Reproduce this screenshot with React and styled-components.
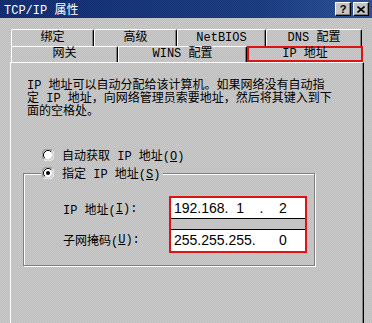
import React from "react";
import styled, { createGlobalStyle } from "styled-components";

const GlobalStyle = createGlobalStyle`
  html, body {
    margin: 0;
    padding: 0;
  }
  body {
    width: 372px;
    height: 323px;
    overflow: hidden;
    background: #c4c4c4;
  }
`;

const dither = `
  background-color: #c4c4c4;
  background-image: repeating-conic-gradient(#bdbdbd 0 25%, #cbcbcb 0 50%);
  background-size: 2px 2px;
`;

const Window = styled.div`
  width: 372px;
  height: 323px;
  overflow: hidden;
  display: flex;
  flex-direction: column;
  ${dither}
  font-family: "Liberation Mono", "Noto Sans CJK SC", monospace;
  font-size: 12px;
  color: #000;
`;

const TitleBar = styled.div`
  flex: none;
  height: 18px;
  display: flex;
  align-items: flex-start;
  padding: 0 3px 0 4px;
  background-color: #0e2a6e;
  background-image: repeating-conic-gradient(rgba(255, 255, 255, 0.08) 0 25%, transparent 0 50%),
    linear-gradient(90deg, #0a2468, #143478 70%, #24498f);
  background-size: 2px 2px, 100% 100%;
`;

const Title = styled.div`
  flex: 1;
  margin-top: 5px;
  line-height: 13px;
  color: #fff;
  white-space: nowrap;
`;

const Caption = styled.div`
  display: flex;
  gap: 2px;
  margin-top: 2px;
`;

const CaptionButton = styled.div`
  box-sizing: border-box;
  width: 16px;
  height: 14px;
  display: flex;
  align-items: center;
  justify-content: center;
  background: #c4c4c4;
  border-top: 1px solid #fff;
  border-left: 1px solid #fff;
  border-right: 1px solid #000;
  border-bottom: 1px solid #000;
  box-shadow: inset -1px -1px 0 #808080;
  font-family: "Liberation Sans", Arial, sans-serif;
  font-weight: bold;
  font-size: 11px;
  line-height: 11px;
`;

const Body = styled.div`
  flex: 1;
  min-height: 0;
  display: flex;
  flex-direction: column;
  padding: 11px 0 0 10px;
`;

const TabRow = styled.div`
  flex: none;
  display: flex;
  height: ${(p) => p.$h}px;
  padding-left: 1px;
`;

const Tab = styled.div`
  box-sizing: border-box;
  width: ${(p) => p.$w}px;
  height: 100%;
  display: flex;
  align-items: center;
  justify-content: center;
  white-space: nowrap;
  line-height: 13px;
  border-top: 1px solid #fff;
  border-left: 1px solid #fff;
  border-right: 1px solid #000;
  box-shadow: inset -1px 0 0 #808080;
  border-radius: 2px 2px 0 0;
  ${(p) =>
    p.$marked &&
    `
    border: 2px solid #dc1414;
    border-radius: 0;
    box-shadow: none;
  `}
`;

const Panel = styled.div`
  box-sizing: border-box;
  flex: 1;
  width: 354px;
  border-top: 1px solid #fff;
  border-left: 1px solid #fff;
  border-right: 1px solid #000;
  box-shadow: inset -1px 0 0 #808080;
  padding: 17px 0 0 12px;
`;

const Intro = styled.p`
  margin: 0;
  padding-left: 4px;
  line-height: 13px;
  white-space: nowrap;
`;

const RadioRow = styled.div`
  display: flex;
  align-items: center;
  gap: 8px;
  height: 14px;
  margin-top: 29px;
  padding-left: 19px;
  white-space: nowrap;
`;

const Group = styled.fieldset`
  box-sizing: border-box;
  width: 292px;
  min-width: 0;
  margin: 4px 0 0 0;
  padding: 0 0 12px 0;
  border: 1px solid #808080;
  box-shadow: 1px 1px 0 #fff, inset 1px 1px 0 #fff;
`;

const Legend = styled.legend`
  display: flex;
  align-items: center;
  gap: 8px;
  height: 14px;
  margin-left: 17px;
  padding: 0 3px 0 1px;
  white-space: nowrap;
  ${dither}
`;

const GroupBody = styled.div`
  display: grid;
  grid-template-columns: 106px 138px;
  grid-template-rows: 23px 10px 24px;
  padding: 16px 0 0 39px;
`;

const FieldLabel = styled.div`
  grid-column: 1;
  grid-row: ${(p) => p.$row};
  display: flex;
  align-items: center;
  padding: ${(p) => p.$pad};
  white-space: nowrap;
`;

const Frame = styled.div`
  grid-column: 2;
  grid-row: 1 / 4;
  display: flex;
  flex-direction: column;
  border: 2px solid #dc1414;
`;

const Field = styled.div`
  height: ${(p) => p.$h}px;
  display: flex;
  align-items: center;
  padding-left: 3px;
  background: #fff;
  border-${(p) => p.$edge}: 1px solid #000;
  font-family: "Liberation Sans", Arial, sans-serif;
  font-size: 14px;
  white-space: pre;
`;

const FieldGap = styled.div`
  height: 10px;
`;

const Radio = ({ checked }) => (
  <svg width="12" height="12" viewBox="0 0 12 12">
    <circle cx="6" cy="6" r="4.2" fill="#fff" />
    <path d="M1.61 10.39 A5.5 5.5 0 0 1 10.39 1.61" fill="none" stroke="#808080" />
    <path d="M10.39 1.61 A5.5 5.5 0 0 1 1.61 10.39" fill="none" stroke="#fff" />
    <path d="M2.82 9.18 A4.5 4.5 0 0 1 9.18 2.82" fill="none" stroke="#000" />
    <path d="M9.18 2.82 A4.5 4.5 0 0 1 2.82 9.18" fill="none" stroke="#dcdcdc" />
    {checked && <circle cx="6" cy="6" r="2" fill="#000" />}
  </svg>
);

const CloseGlyph = () => (
  <svg width="8" height="7" viewBox="0 0 8 7">
    <path d="M0.5 0.5 L7.5 6.5 M7.5 0.5 L0.5 6.5" stroke="#000" strokeWidth="1.6" />
  </svg>
);

const backRow = [
  { label: "绑定", w: 83 },
  { label: "高级", w: 83 },
  { label: "NetBIOS", w: 89 },
  { label: "DNS 配置", w: 96 },
];

const frontRow = [
  { label: "网关", w: 107 },
  { label: "WINS 配置", w: 129 },
  { label: "IP 地址", w: 116, marked: true },
];

export default function App() {
  return (
    <Window>
      <GlobalStyle />
      <TitleBar>
        <Title>TCP/IP 属性</Title>
        <Caption>
          <CaptionButton>?</CaptionButton>
          <CaptionButton>
            <CloseGlyph />
          </CaptionButton>
        </Caption>
      </TitleBar>
      <Body>
        <TabRow $h={17}>
          {backRow.map((t) => (
            <Tab key={t.label} $w={t.w}>
              {t.label}
            </Tab>
          ))}
        </TabRow>
        <TabRow $h={16}>
          {frontRow.map((t) => (
            <Tab key={t.label} $w={t.w} $marked={t.marked}>
              {t.label}
            </Tab>
          ))}
        </TabRow>
        <Panel>
          <Intro>
            IP 地址可以自动分配给该计算机。如果网络没有自动指
            <br />
            定 IP 地址，向网络管理员索要地址，然后将其键入到下
            <br />
            面的空格处。
          </Intro>
          <RadioRow>
            <Radio />
            <span>
              自动获取 IP 地址(<u>O</u>)
            </span>
          </RadioRow>
          <Group>
            <Legend>
              <Radio checked />
              <span>
                指定 IP 地址(<u>S</u>)
              </span>
            </Legend>
            <GroupBody>
              <FieldLabel $row={1} $pad="2px 0 0 0">
                IP 地址(<u>I</u>):
              </FieldLabel>
              <FieldLabel $row={3} $pad="0 0 2px 0">
                子网掩码(<u>U</u>):
              </FieldLabel>
              <Frame>
                <Field $h={21} $edge="bottom">
                  {"192.168.  1    .    2"}
                </Field>
                <FieldGap />
                <Field $h={22} $edge="top">
                  {"255.255.255.      0"}
                </Field>
              </Frame>
            </GroupBody>
          </Group>
        </Panel>
      </Body>
    </Window>
  );
}
